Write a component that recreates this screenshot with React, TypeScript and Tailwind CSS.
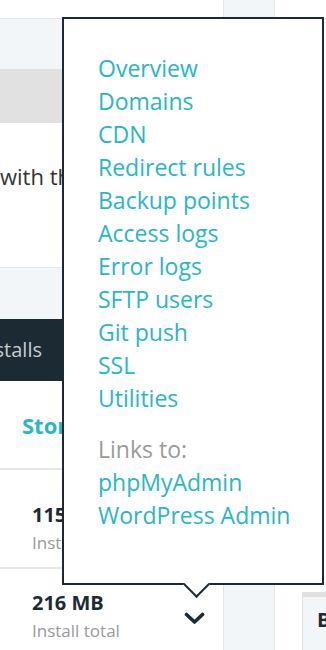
import React from "react";

const menu = [
  "Overview",
  "Domains",
  "CDN",
  "Redirect rules",
  "Backup points",
  "Access logs",
  "Error logs",
  "SFTP users",
  "Git push",
  "SSL",
  "Utilities",
];

function Chevron() {
  return (
    <svg width="21" height="13" viewBox="0 0 21 13" fill="none">
      <polyline
        points="2.5,2.5 10.5,10 18.5,2.5"
        stroke="#1d2a34"
        strokeWidth="3.6"
        strokeLinecap="round"
        strokeLinejoin="round"
      />
    </svg>
  );
}

export default function App() {
  return (
    <div className="relative w-[326px] h-[650px] overflow-hidden bg-white font-['Open_Sans',sans-serif]">
      {/* page behind the popover */}
      <div className="flex h-full">
        <div className="w-[223px] shrink-0 flex flex-col overflow-hidden">
          <div className="h-[18px]" />
          <div className="h-[51px] bg-[#f3f6f9] border-t border-[#e3e7eb]" />
          <div className="h-[54px] bg-[#e1e1e1]" />
          <div className="h-[144px] pt-[37px] text-[22px] leading-[33px] text-[#333] whitespace-nowrap">
            with the latest
          </div>
          <div className="h-[52px] bg-[#f3f6f9] border-t border-[#e3e7eb]" />
          <div className="h-[62px] bg-[#1b2a33] flex items-center">
            <div className="w-[42px] flex justify-end">
              <span className="text-[20px] leading-[30px] text-[#c9cdd0] whitespace-nowrap">Installs</span>
            </div>
          </div>
          <div className="h-[87px] pl-[22px] pt-[29px]">
            <span className="text-[22px] leading-[30px] font-bold text-[#29b6c6]">Storage</span>
          </div>
          <div className="h-[99px] border-t-2 border-[#e6e6e6] flex items-start pl-[32px] pt-[30px] pr-[19px]">
            <div>
              <div className="text-[20px] leading-[30px] font-bold text-[#1d2a34]">115 MB</div>
              <div className="text-[17px] leading-[25px] text-[#9a9a9a]">Install total</div>
            </div>
          </div>
          <div className="flex-1 border-t-2 border-[#e6e6e6] flex items-start pl-[32px] pt-[19px] pr-[18px]">
            <div>
              <div className="text-[20px] leading-[30px] font-bold text-[#1d2a34]">216 MB</div>
              <div className="text-[17px] leading-[25px] text-[#9a9a9a]">Install total</div>
            </div>
            <div className="ml-auto mt-[24px]">
              <Chevron />
            </div>
          </div>
        </div>
        <div className="w-[52px] shrink-0 bg-[#f3f6f9] border-x border-[#e3e7eb]" />
        <div className="w-[27px] shrink-0" />
        <div className="flex-1 flex flex-col overflow-hidden">
          <div className="h-[592px]" />
          <div className="flex-1 bg-[#f3f6f9] border-t-[5px] border-l border-[#e1e1e1] pl-[14px] pt-[8px]">
            <span className="text-[20px] leading-[30px] font-bold text-[#1d2a34]">B</span>
          </div>
        </div>
      </div>

      {/* popover */}
      <div className="absolute left-[62px] top-[17px] w-[262px] h-[568px] border-2 border-[#1d2a34] bg-white">
        <div className="pl-[34px] pt-[33px] text-[23px] leading-[33px] whitespace-nowrap">
          {menu.map((m) => (
            <div key={m} className="text-[#29b6c6]">
              {m}
            </div>
          ))}
          <div className="mt-[18px] text-[#9b9b9b]">Links to:</div>
          <div className="text-[#29b6c6]">phpMyAdmin</div>
          <div className="text-[#29b6c6]">WordPress Admin</div>
        </div>
        <div className="absolute left-[123px] bottom-[-11px] w-[19px] h-[19px] rotate-45 bg-white border-r-2 border-b-2 border-[#1d2a34]" />
      </div>
    </div>
  );
}
